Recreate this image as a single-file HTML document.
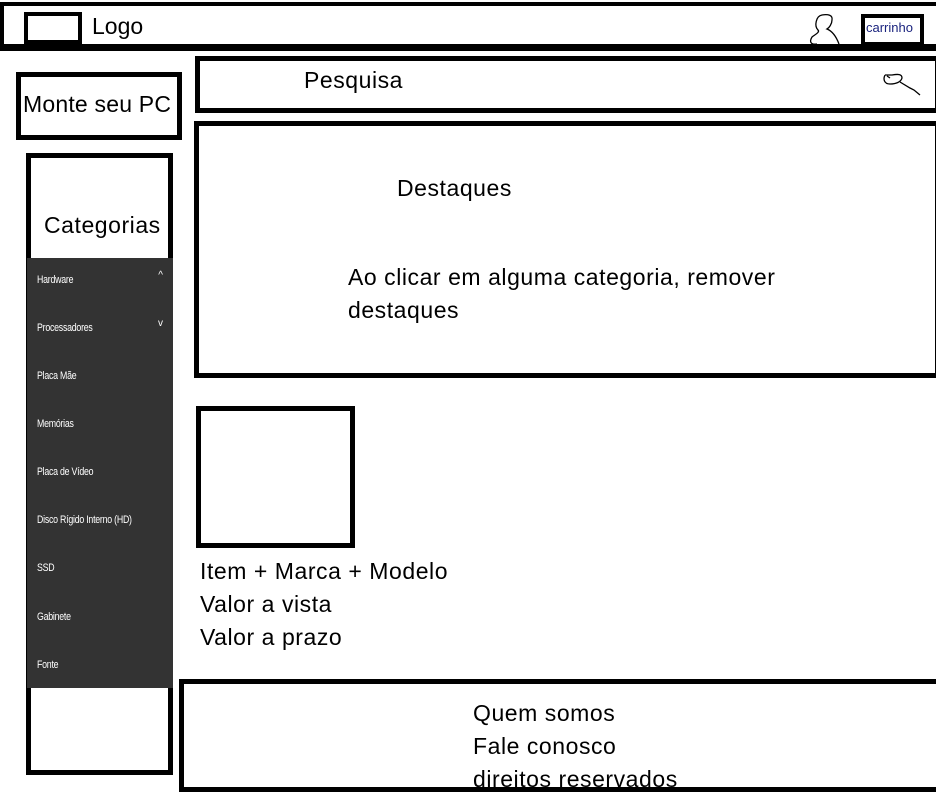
<!DOCTYPE html>
<html><head><meta charset="utf-8"><style>
*{margin:0;padding:0;box-sizing:border-box}
body{width:936px;height:798px;background:#fff;position:relative;overflow:hidden;font-family:"Liberation Sans",sans-serif;color:#000}
.b{position:absolute;border:5px solid #000}
.t{position:absolute;font-size:23px;letter-spacing:.55px;white-space:nowrap;line-height:1}
.dark{position:absolute;left:27px;top:258px;width:146px;height:430px;background:#333}
.it{position:absolute;left:10px;color:#fff;font-size:11px;transform:scaleX(.8);transform-origin:left;white-space:nowrap;letter-spacing:-0.3px}
</style></head><body>
<!-- header -->
<div style="position:absolute;left:0;top:2px;width:940px;height:49px;border:4px solid #000;border-bottom-width:7px;border-right:none"></div>
<div class="b" style="left:24px;top:12px;width:58px;height:32px;border-width:4px"></div>
<div class="t" style="left:92px;top:15px;font-size:23px;letter-spacing:0">Logo</div>
<svg style="position:absolute;left:808px;top:12px" width="40" height="38" viewBox="0 0 40 38" fill="none" stroke="#000" stroke-width="1.3">
<path d="M10 18 C6 14 8 4 14 3 C20 2 25 3 24 8 C24 12 21 16 19 17 C24 19 28 24 31 32 M10 18 C12 20 8 22 4 25 C1 30 3 33 9 32"/></svg>
<div class="b" style="left:861px;top:14px;width:63px;height:32px;border-width:4px"></div>
<div class="t" style="left:866px;top:21px;font-size:13px;letter-spacing:0;color:#1a237e">carrinho</div>
<!-- left -->
<div class="b" style="left:16px;top:72px;width:166px;height:68px"></div>
<div class="t" style="left:23px;top:93px;letter-spacing:.2px">Monte seu PC</div>
<div class="b" style="left:26px;top:153px;width:147px;height:622px"></div>
<div class="t" style="left:44px;top:214px">Categorias</div>
<div class="dark">
<div class="it" style="top:16px">Hardware</div><div style="position:absolute;right:10px;top:12px;color:#fff;font-size:10px">^</div>
<div class="it" style="top:64px">Processadores</div><div style="position:absolute;right:10px;top:60px;color:#fff;font-size:10px">v</div>
<div class="it" style="top:112px">Placa Mãe</div>
<div class="it" style="top:160px">Memórias</div>
<div class="it" style="top:208px">Placa de Vídeo</div>
<div class="it" style="top:256px">Disco Rígido Interno (HD)</div>
<div class="it" style="top:304px">SSD</div>
<div class="it" style="top:353px">Gabinete</div>
<div class="it" style="top:401px">Fonte</div>
</div>
<!-- search -->
<div class="b" style="left:195px;top:56px;width:745px;height:57px"></div>
<div class="t" style="left:304px;top:69px">Pesquisa</div>
<svg style="position:absolute;left:880px;top:70px" width="50" height="30" viewBox="0 0 50 30" fill="none" stroke="#000" stroke-width="1.3">
<path d="M5 5 C3 9 4 14 10 14 C16 14 21 12 22 8 C22 4 18 4 12 5 C8 5 6 5 5 5 M7 6 L10 8 M20 12 L30 18 L34 20 L40 25"/></svg>
<!-- destaques -->
<div class="b" style="left:194px;top:121px;width:746px;height:257px"></div>
<div class="t" style="left:397px;top:177px">Destaques</div>
<div class="t" style="left:348px;top:261px;line-height:33px">Ao clicar em alguma categoria, remover<br>destaques</div>
<!-- product -->
<div class="b" style="left:196px;top:406px;width:159px;height:142px"></div>
<div class="t" style="left:200px;top:555px;line-height:33px">Item + Marca + Modelo<br>Valor a vista<br>Valor a prazo</div>
<!-- footer -->
<div class="b" style="left:179px;top:679px;width:765px;height:113px"></div>
<div class="t" style="left:473px;top:697px;line-height:33px">Quem somos<br>Fale conosco<br>direitos reservados</div>
</body></html>
